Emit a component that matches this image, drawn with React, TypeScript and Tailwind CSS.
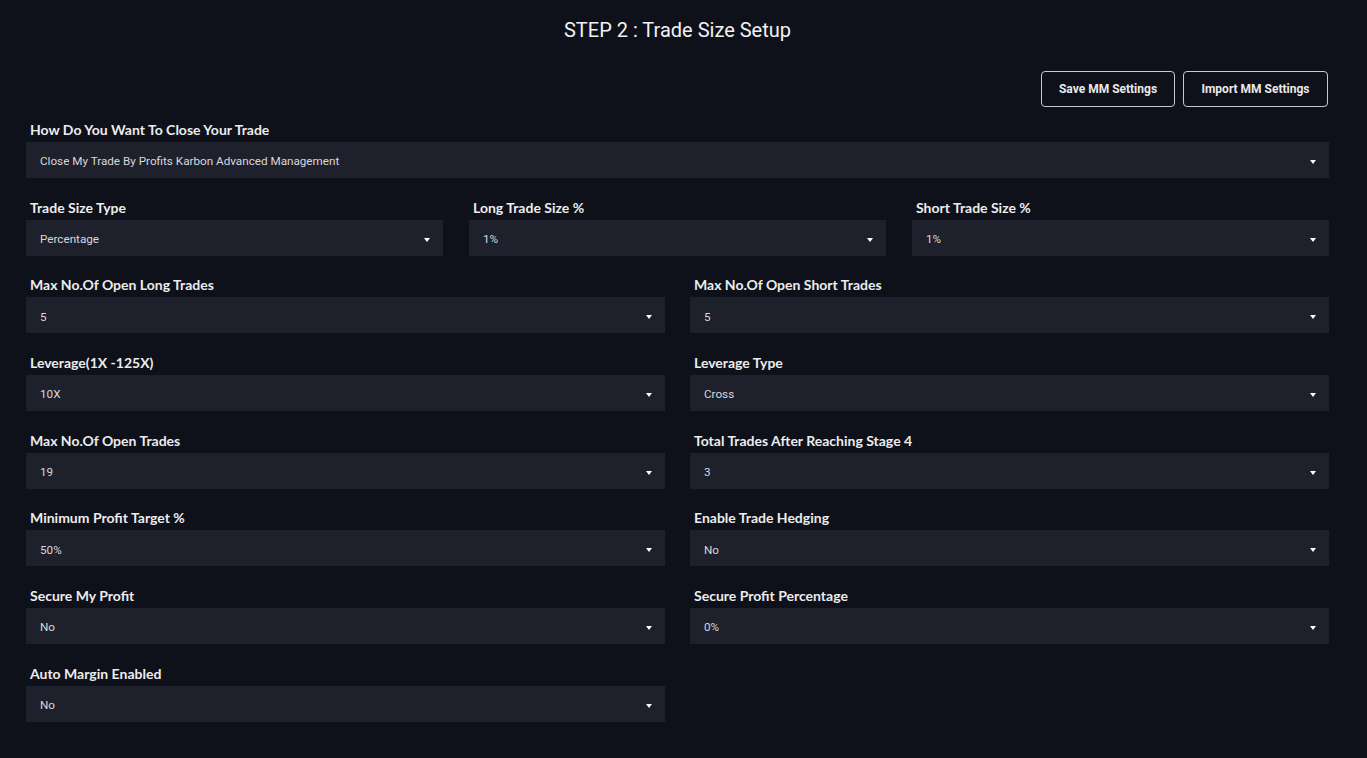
import React from 'react';

interface Field {
  label: string;
  value: string;
}

function SelectField({ label, value }: Field) {
  return (
    <div className="flex flex-col">
      <label className="px-1 mb-1 text-[14px] leading-[17px] font-bold text-[#ececec] font-['Lato',sans-serif]">
        {label}
      </label>
      <div className="h-9 bg-[#1e202c] flex items-center justify-between pt-1 pl-[14px] pr-[13px] cursor-pointer">
        <span className="text-[11.7px] text-[#d6d8de] font-['Roboto',sans-serif]">{value}</span>
        <span className="w-0 h-0 border-l-[3px] border-r-[3px] border-t-[4px] border-l-transparent border-r-transparent border-t-white" />
      </div>
    </div>
  );
}

export default function App() {
  const rows: Field[][] = [
    [
      { label: 'Max No.Of Open Long Trades', value: '5' },
      { label: 'Max No.Of Open Short Trades', value: '5' },
    ],
    [
      { label: 'Leverage(1X -125X)', value: '10X' },
      { label: 'Leverage Type', value: 'Cross' },
    ],
    [
      { label: 'Max No.Of Open Trades', value: '19' },
      { label: 'Total Trades After Reaching Stage 4', value: '3' },
    ],
    [
      { label: 'Minimum Profit Target %', value: '50%' },
      { label: 'Enable Trade Hedging', value: 'No' },
    ],
    [
      { label: 'Secure My Profit', value: 'No' },
      { label: 'Secure Profit Percentage', value: '0%' },
    ],
    [{ label: 'Auto Margin Enabled', value: 'No' }],
  ];

  return (
    <div className="min-h-screen bg-[#0e101a] font-['Roboto',sans-serif] pl-[26px] pr-[38px] pt-4 pb-8">
      <h1 className="text-center text-[20px] leading-7 text-[#f2f2f2] font-normal">STEP 2 : Trade Size Setup</h1>

      <div className="flex justify-end gap-2 mt-[27px] pr-px">
        <button className="h-9 w-[134px] border border-[#c9c9cc] rounded-[4px] text-[12px] font-bold text-[#e9e9ea]">
          Save MM Settings
        </button>
        <button className="h-9 w-[145px] border border-[#c9c9cc] rounded-[4px] text-[12px] font-bold text-[#e9e9ea]">
          Import MM Settings
        </button>
      </div>

      <div className="mt-[14px] flex flex-col gap-y-[20.7px]">
        <SelectField
          label="How Do You Want To Close Your Trade"
          value="Close My Trade By Profits Karbon Advanced Management"
        />
        <div className="grid grid-cols-3 gap-x-[26px]">
          <SelectField label="Trade Size Type" value="Percentage" />
          <SelectField label="Long Trade Size %" value="1%" />
          <SelectField label="Short Trade Size %" value="1%" />
        </div>
        {rows.map((row, i) => (
          <div key={i} className="grid grid-cols-2 gap-x-[25px]">
            {row.map((f) => (
              <SelectField key={f.label} label={f.label} value={f.value} />
            ))}
          </div>
        ))}
      </div>
    </div>
  );
}
